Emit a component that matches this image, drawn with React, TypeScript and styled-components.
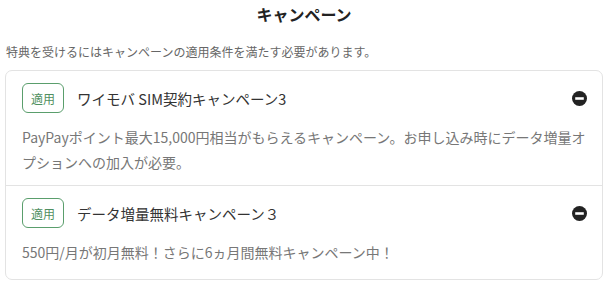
import React from "react";
import styled, { createGlobalStyle } from "styled-components";

const Global = createGlobalStyle`
  html, body { margin: 0; padding: 0; background: #fff; }
  body { font-family: "Noto Sans CJK JP", "Noto Sans", sans-serif; }
`;

const Page = styled.div`
  width: 613px;
  padding: 0 10px 0 5px;
  box-sizing: border-box;
`;

const Title = styled.h2`
  margin: 0;
  font-size: 16px;
  line-height: 28px;
  font-weight: 700;
  color: #222;
  text-align: center;
`;

const Note = styled.p`
  margin: 15px 0 0 1px;
  font-size: 12px;
  line-height: 18px;
  color: #666;
`;

const Card = styled.div`
  margin-top: 9px;
  border: 1px solid #e3e3e3;
  border-radius: 7px;
  background: #fff;
`;

const Item = styled.div<{ $last?: boolean }>`
  padding: 12px 15px ${(p) => (p.$last ? "14px" : "10px")} 16px;
  border-bottom: ${(p) => (p.$last ? "none" : "1px solid #e3e3e3")};
`;

const Head = styled.div`
  display: flex;
  align-items: center;
  gap: 13px;
`;

const Badge = styled.span`
  display: inline-flex;
  align-items: center;
  justify-content: center;
  box-sizing: border-box;
  width: 42px;
  height: 30px;
  border: 1px solid #5a9e6c;
  border-radius: 6px;
  color: #4f8f60;
  font-size: 12px;
  flex: none;
`;

const Name = styled.span`
  flex: 1;
  font-size: 14.5px;
  color: #333;
`;

const Icon = styled.svg`
  width: 15px;
  height: 15px;
  flex: none;
`;

const Desc = styled.p`
  margin: 12px 0 0;
  font-size: 14px;
  line-height: 25px;
  color: #777;
`;

const MinusCircle = () => (
  <Icon viewBox="0 0 14 14">
    <circle cx="7" cy="7" r="7" fill="#222" />
    <rect x="3" y="5.8" width="8" height="2.4" fill="#fff" />
  </Icon>
);

const items = [
  {
    name: "ワイモバ SIM契約キャンペーン3",
    desc: "PayPayポイント最大15,000円相当がもらえるキャンペーン。お申し込み時にデータ増量オプションへの加入が必要。",
  },
  {
    name: "データ増量無料キャンペーン３",
    desc: "550円/月が初月無料！さらに6ヵ月間無料キャンペーン中！",
  },
];

export default function App() {
  return (
    <Page>
      <Global />
      <Title>キャンペーン</Title>
      <Note>特典を受けるにはキャンペーンの適用条件を満たす必要があります。</Note>
      <Card>
        {items.map((it, i) => (
          <Item key={i} $last={i === items.length - 1}>
            <Head>
              <Badge>適用</Badge>
              <Name>{it.name}</Name>
              <MinusCircle />
            </Head>
            <Desc>{it.desc}</Desc>
          </Item>
        ))}
      </Card>
    </Page>
  );
}
